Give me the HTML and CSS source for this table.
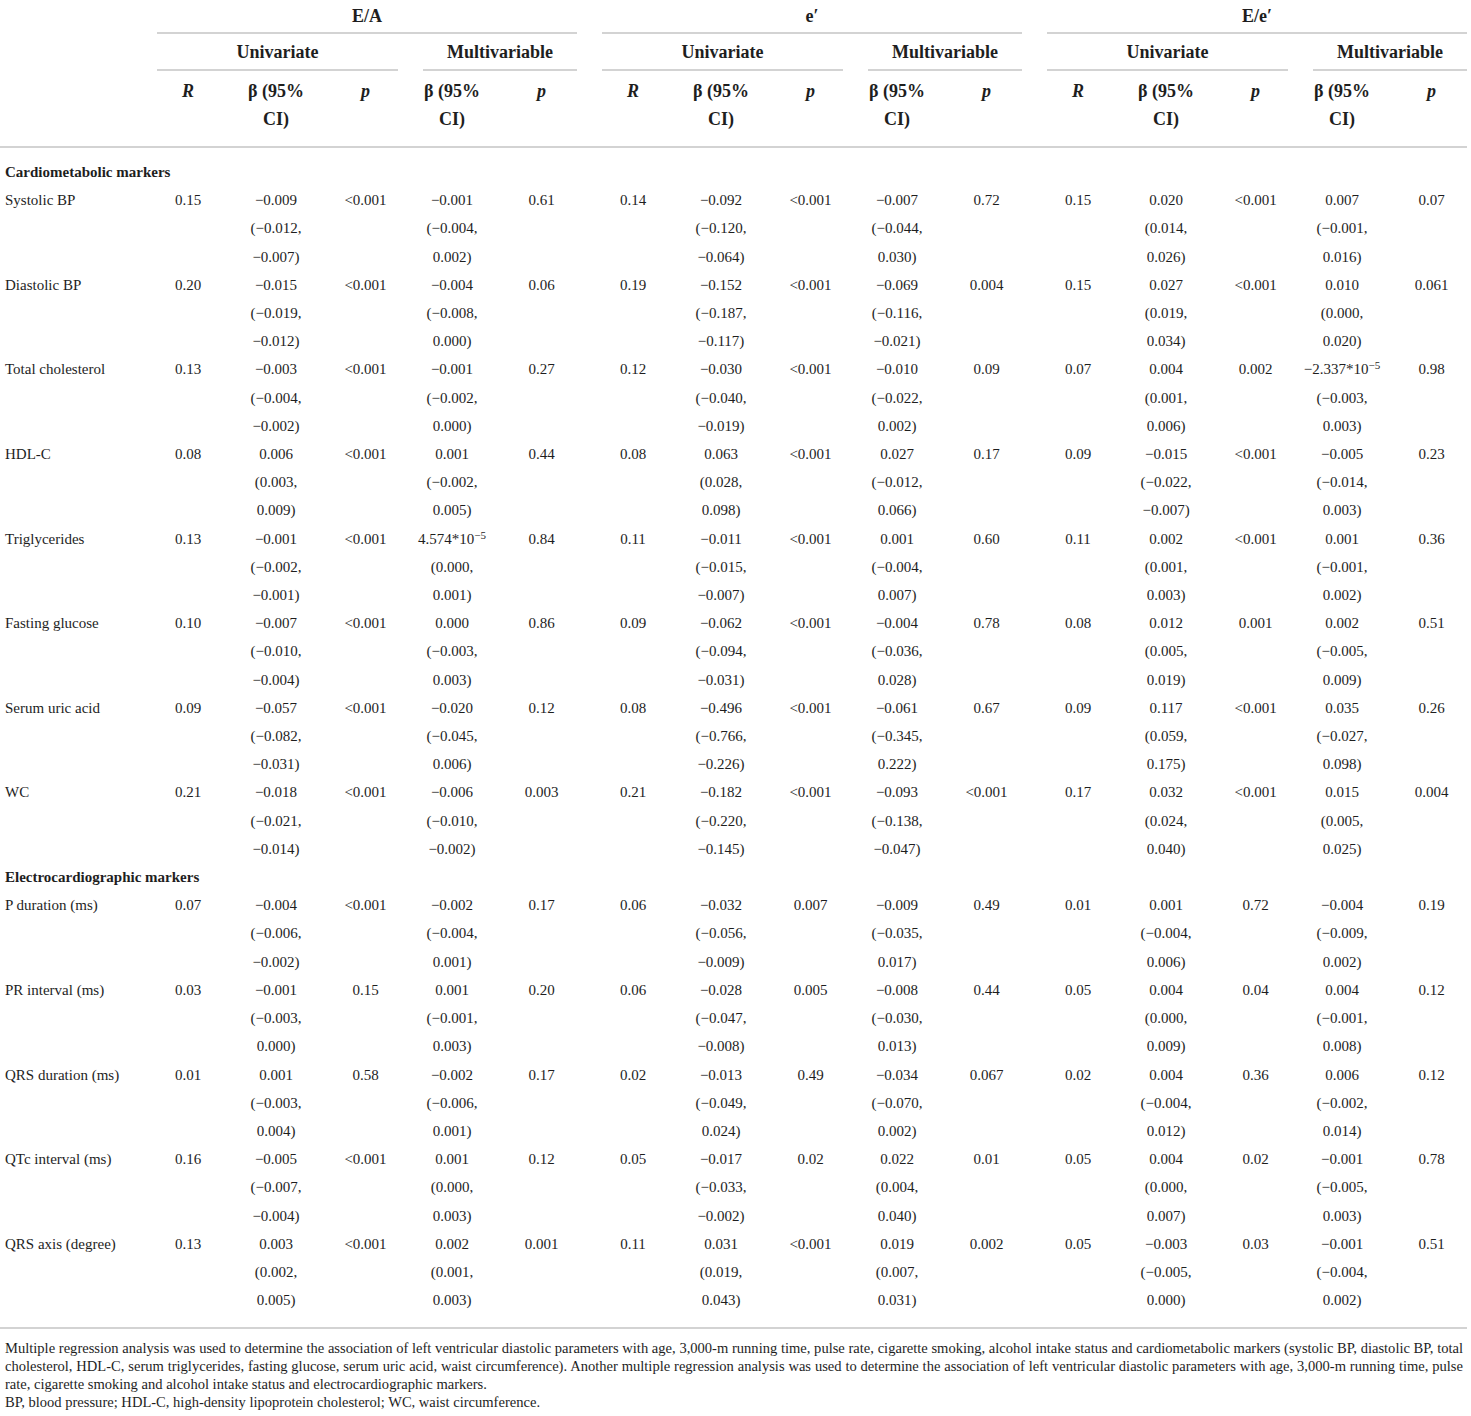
FILE: index.html
```html
<!DOCTYPE html>
<html lang="en">
<head>
<meta charset="utf-8">
<title>Regression table</title>
<link rel="stylesheet" href="styles.css">
</head>
<body>
<div class="wrap">
<table class="tbl">
<colgroup>
<col class="c-lab">
<col class="c-r"><col class="c-b"><col class="c-p"><col class="c-mb"><col class="c-mp">
<col class="c-gap">
<col class="c-r"><col class="c-b"><col class="c-p"><col class="c-mb"><col class="c-mp">
<col class="c-gap">
<col class="c-r"><col class="c-b"><col class="c-p"><col class="c-mb"><col class="c-mp">
</colgroup>
<thead>
<tr class="r1">
<th></th>
<th colspan="5"><div class="grp">E/A</div></th>
<th></th>
<th colspan="5"><div class="grp">e′</div></th>
<th></th>
<th colspan="5"><div class="grp">E/e′</div></th>
</tr>
<tr class="r2">
<th></th>
<th colspan="3"><div class="sub">Univariate</div></th>
<th colspan="2"><div class="sub multi">Multivariable</div></th>
<th></th>
<th colspan="3"><div class="sub">Univariate</div></th>
<th colspan="2"><div class="sub multi">Multivariable</div></th>
<th></th>
<th colspan="3"><div class="sub">Univariate</div></th>
<th colspan="2"><div class="sub multi">Multivariable</div></th>
</tr>
<tr class="r3">
<th></th>
<th><i>R</i></th><th>β (95%<br>CI)</th><th><i>p</i></th><th>β (95%<br>CI)</th><th><i>p</i></th>
<th></th>
<th><i>R</i></th><th>β (95%<br>CI)</th><th><i>p</i></th><th>β (95%<br>CI)</th><th><i>p</i></th>
<th></th>
<th><i>R</i></th><th>β (95%<br>CI)</th><th><i>p</i></th><th>β (95%<br>CI)</th><th><i>p</i></th>
</tr>
</thead>
<tbody>
<tr class="sec first"><td colspan="18">Cardiometabolic markers</td></tr>
<tr>
<td class="lab">Systolic BP</td>
<td>0.15</td><td>−0.009<br>(−0.012,<br>−0.007)</td><td>&lt;0.001</td><td>−0.001<br>(−0.004,<br>0.002)</td><td>0.61</td>
<td></td>
<td>0.14</td><td>−0.092<br>(−0.120,<br>−0.064)</td><td>&lt;0.001</td><td>−0.007<br>(−0.044,<br>0.030)</td><td>0.72</td>
<td></td>
<td>0.15</td><td>0.020<br>(0.014,<br>0.026)</td><td>&lt;0.001</td><td>0.007<br>(−0.001,<br>0.016)</td><td>0.07</td>
</tr>
<tr>
<td class="lab">Diastolic BP</td>
<td>0.20</td><td>−0.015<br>(−0.019,<br>−0.012)</td><td>&lt;0.001</td><td>−0.004<br>(−0.008,<br>0.000)</td><td>0.06</td>
<td></td>
<td>0.19</td><td>−0.152<br>(−0.187,<br>−0.117)</td><td>&lt;0.001</td><td>−0.069<br>(−0.116,<br>−0.021)</td><td>0.004</td>
<td></td>
<td>0.15</td><td>0.027<br>(0.019,<br>0.034)</td><td>&lt;0.001</td><td>0.010<br>(0.000,<br>0.020)</td><td>0.061</td>
</tr>
<tr>
<td class="lab">Total cholesterol</td>
<td>0.13</td><td>−0.003<br>(−0.004,<br>−0.002)</td><td>&lt;0.001</td><td>−0.001<br>(−0.002,<br>0.000)</td><td>0.27</td>
<td></td>
<td>0.12</td><td>−0.030<br>(−0.040,<br>−0.019)</td><td>&lt;0.001</td><td>−0.010<br>(−0.022,<br>0.002)</td><td>0.09</td>
<td></td>
<td>0.07</td><td>0.004<br>(0.001,<br>0.006)</td><td>0.002</td><td>−2.337*10<sup>−5</sup><br>(−0.003,<br>0.003)</td><td>0.98</td>
</tr>
<tr>
<td class="lab">HDL-C</td>
<td>0.08</td><td>0.006<br>(0.003,<br>0.009)</td><td>&lt;0.001</td><td>0.001<br>(−0.002,<br>0.005)</td><td>0.44</td>
<td></td>
<td>0.08</td><td>0.063<br>(0.028,<br>0.098)</td><td>&lt;0.001</td><td>0.027<br>(−0.012,<br>0.066)</td><td>0.17</td>
<td></td>
<td>0.09</td><td>−0.015<br>(−0.022,<br>−0.007)</td><td>&lt;0.001</td><td>−0.005<br>(−0.014,<br>0.003)</td><td>0.23</td>
</tr>
<tr>
<td class="lab">Triglycerides</td>
<td>0.13</td><td>−0.001<br>(−0.002,<br>−0.001)</td><td>&lt;0.001</td><td>4.574*10<sup>−5</sup><br>(0.000,<br>0.001)</td><td>0.84</td>
<td></td>
<td>0.11</td><td>−0.011<br>(−0.015,<br>−0.007)</td><td>&lt;0.001</td><td>0.001<br>(−0.004,<br>0.007)</td><td>0.60</td>
<td></td>
<td>0.11</td><td>0.002<br>(0.001,<br>0.003)</td><td>&lt;0.001</td><td>0.001<br>(−0.001,<br>0.002)</td><td>0.36</td>
</tr>
<tr>
<td class="lab">Fasting glucose</td>
<td>0.10</td><td>−0.007<br>(−0.010,<br>−0.004)</td><td>&lt;0.001</td><td>0.000<br>(−0.003,<br>0.003)</td><td>0.86</td>
<td></td>
<td>0.09</td><td>−0.062<br>(−0.094,<br>−0.031)</td><td>&lt;0.001</td><td>−0.004<br>(−0.036,<br>0.028)</td><td>0.78</td>
<td></td>
<td>0.08</td><td>0.012<br>(0.005,<br>0.019)</td><td>0.001</td><td>0.002<br>(−0.005,<br>0.009)</td><td>0.51</td>
</tr>
<tr>
<td class="lab">Serum uric acid</td>
<td>0.09</td><td>−0.057<br>(−0.082,<br>−0.031)</td><td>&lt;0.001</td><td>−0.020<br>(−0.045,<br>0.006)</td><td>0.12</td>
<td></td>
<td>0.08</td><td>−0.496<br>(−0.766,<br>−0.226)</td><td>&lt;0.001</td><td>−0.061<br>(−0.345,<br>0.222)</td><td>0.67</td>
<td></td>
<td>0.09</td><td>0.117<br>(0.059,<br>0.175)</td><td>&lt;0.001</td><td>0.035<br>(−0.027,<br>0.098)</td><td>0.26</td>
</tr>
<tr>
<td class="lab">WC</td>
<td>0.21</td><td>−0.018<br>(−0.021,<br>−0.014)</td><td>&lt;0.001</td><td>−0.006<br>(−0.010,<br>−0.002)</td><td>0.003</td>
<td></td>
<td>0.21</td><td>−0.182<br>(−0.220,<br>−0.145)</td><td>&lt;0.001</td><td>−0.093<br>(−0.138,<br>−0.047)</td><td>&lt;0.001</td>
<td></td>
<td>0.17</td><td>0.032<br>(0.024,<br>0.040)</td><td>&lt;0.001</td><td>0.015<br>(0.005,<br>0.025)</td><td>0.004</td>
</tr>
<tr class="sec"><td colspan="18">Electrocardiographic markers</td></tr>
<tr>
<td class="lab">P duration (ms)</td>
<td>0.07</td><td>−0.004<br>(−0.006,<br>−0.002)</td><td>&lt;0.001</td><td>−0.002<br>(−0.004,<br>0.001)</td><td>0.17</td>
<td></td>
<td>0.06</td><td>−0.032<br>(−0.056,<br>−0.009)</td><td>0.007</td><td>−0.009<br>(−0.035,<br>0.017)</td><td>0.49</td>
<td></td>
<td>0.01</td><td>0.001<br>(−0.004,<br>0.006)</td><td>0.72</td><td>−0.004<br>(−0.009,<br>0.002)</td><td>0.19</td>
</tr>
<tr>
<td class="lab">PR interval (ms)</td>
<td>0.03</td><td>−0.001<br>(−0.003,<br>0.000)</td><td>0.15</td><td>0.001<br>(−0.001,<br>0.003)</td><td>0.20</td>
<td></td>
<td>0.06</td><td>−0.028<br>(−0.047,<br>−0.008)</td><td>0.005</td><td>−0.008<br>(−0.030,<br>0.013)</td><td>0.44</td>
<td></td>
<td>0.05</td><td>0.004<br>(0.000,<br>0.009)</td><td>0.04</td><td>0.004<br>(−0.001,<br>0.008)</td><td>0.12</td>
</tr>
<tr>
<td class="lab">QRS duration (ms)</td>
<td>0.01</td><td>0.001<br>(−0.003,<br>0.004)</td><td>0.58</td><td>−0.002<br>(−0.006,<br>0.001)</td><td>0.17</td>
<td></td>
<td>0.02</td><td>−0.013<br>(−0.049,<br>0.024)</td><td>0.49</td><td>−0.034<br>(−0.070,<br>0.002)</td><td>0.067</td>
<td></td>
<td>0.02</td><td>0.004<br>(−0.004,<br>0.012)</td><td>0.36</td><td>0.006<br>(−0.002,<br>0.014)</td><td>0.12</td>
</tr>
<tr>
<td class="lab">QTc interval (ms)</td>
<td>0.16</td><td>−0.005<br>(−0.007,<br>−0.004)</td><td>&lt;0.001</td><td>0.001<br>(0.000,<br>0.003)</td><td>0.12</td>
<td></td>
<td>0.05</td><td>−0.017<br>(−0.033,<br>−0.002)</td><td>0.02</td><td>0.022<br>(0.004,<br>0.040)</td><td>0.01</td>
<td></td>
<td>0.05</td><td>0.004<br>(0.000,<br>0.007)</td><td>0.02</td><td>−0.001<br>(−0.005,<br>0.003)</td><td>0.78</td>
</tr>
<tr class="last">
<td class="lab">QRS axis (degree)</td>
<td>0.13</td><td>0.003<br>(0.002,<br>0.005)</td><td>&lt;0.001</td><td>0.002<br>(0.001,<br>0.003)</td><td>0.001</td>
<td></td>
<td>0.11</td><td>0.031<br>(0.019,<br>0.043)</td><td>&lt;0.001</td><td>0.019<br>(0.007,<br>0.031)</td><td>0.002</td>
<td></td>
<td>0.05</td><td>−0.003<br>(−0.005,<br>0.000)</td><td>0.03</td><td>−0.001<br>(−0.004,<br>0.002)</td><td>0.51</td>
</tr>
</tbody>
</table>
<div class="notes">
<p class="just">Multiple regression analysis was used to determine the association of left ventricular diastolic parameters with age, 3,000-m running time, pulse rate, cigarette smoking, alcohol intake status and cardiometabolic markers (systolic BP, diastolic BP, total cholesterol, HDL-C, serum triglycerides, fasting glucose, serum uric acid, waist circumference). Another multiple regression analysis was used to determine the association of left ventricular diastolic parameters with age, 3,000-m running time, pulse rate, cigarette smoking and alcohol intake status and electrocardiographic markers.</p>
<p>BP, blood pressure; HDL-C, high-density lipoprotein cholesterol; WC, waist circumference.</p>
</div>
</div>
</body>
</html>
```
FILE: styles.css
```css
html, body {
  margin: 0;
  padding: 0;
  background: #ffffff;
}

body {
  font-family: "Liberation Serif", "Times New Roman", serif;
  color: #1e1e1e;
}

.wrap {
  width: 1467px;
}

.tbl {
  width: 1467px;
  table-layout: fixed;
  border-collapse: collapse;
  font-size: 15px;
  line-height: 28.2px;
}

.c-lab { width: 157px; }
.c-r { width: 62px; }
.c-b { width: 114px; }
.c-p { width: 65px; }
.c-mb { width: 108px; }
.c-mp { width: 71px; }
.c-gap { width: 25px; }

.tbl th,
.tbl td {
  padding: 0;
  vertical-align: top;
  text-align: center;
  white-space: nowrap;
}

.tbl thead th {
  font-size: 18px;
  font-weight: bold;
  line-height: 28px;
}

.grp {
  padding: 2px 0 2px;
  border-bottom: 2px solid #d3d3d3;
}

.sub {
  padding: 4px 0 3px;
  border-bottom: 2px solid #d3d3d3;
}

.sub.multi {
  margin-left: 25px;
}

.r3 th {
  padding: 6px 0 13px;
  border-bottom: 2px solid #d3d3d3;
}

.r3 th i {
  font-style: italic;
}

.tbl td.lab {
  text-align: left;
  padding-left: 5px;
}

.sec td {
  text-align: left;
  padding-left: 5px;
  font-weight: bold;
}

.sec.first td {
  padding-top: 10px;
}

.last td {
  padding-bottom: 13px;
  border-bottom: 2px solid #d3d3d3;
}

sup {
  font-size: 11px;
  line-height: 0;
  vertical-align: 5px;
}

.notes {
  margin-top: 11px;
  padding: 0 4px 0 5px;
  font-size: 14.55px;
  line-height: 17.8px;
}

.notes p {
  margin: 0;
}

.notes .just {
  text-align: justify;
}
```
